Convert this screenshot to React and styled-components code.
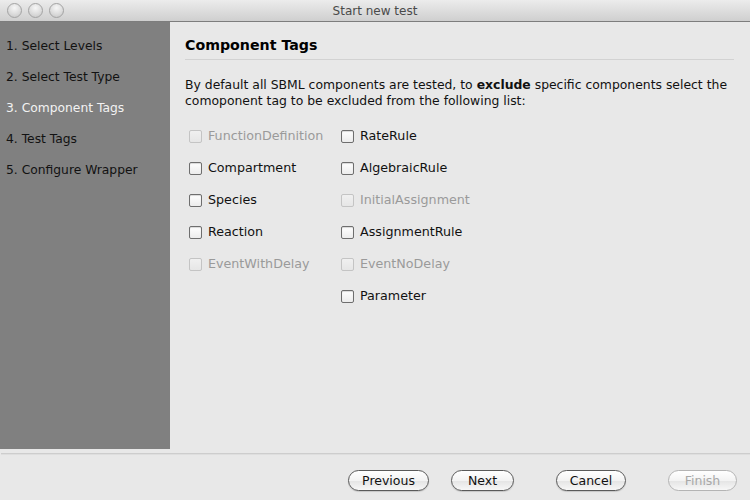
import React from "react";
import styled, { createGlobalStyle } from "styled-components";

const Global = createGlobalStyle`
  html, body { margin: 0; padding: 0; background: #e8e8e8; }
  * { box-sizing: border-box; }
  body { font-family: "DejaVu Sans", "Liberation Sans", sans-serif; }
`;

const Window = styled.div`
  width: 750px;
  height: 500px;
  display: flex;
  flex-direction: column;
  background: #e8e8e8;
  overflow: hidden;
`;

const TitleBar = styled.div`
  height: 22px;
  flex: none;
  display: flex;
  align-items: center;
  position: relative;
  background: linear-gradient(#ececec, #cfcfcf);
  border-bottom: 1px solid #7d7d7d;
`;

const Lights = styled.div`
  display: flex;
  gap: 6px;
  padding-left: 7px;
`;

const Light = styled.span`
  width: 15px;
  height: 15px;
  border-radius: 50%;
  border: 1px solid #a3a3a3;
  background: radial-gradient(circle at 50% 30%, #f7f7f7 0%, #dcdcdc 55%, #c4c4c4 100%);
`;

const Title = styled.div`
  position: absolute;
  left: 0;
  right: 0;
  text-align: center;
  font-size: 12px;
  color: #4a4a4a;
`;

const Body = styled.div`
  height: 427px;
  flex: none;
  display: flex;
`;

const Sidebar = styled.div`
  width: 170px;
  background: #808080;
  padding-top: 16px;
  display: flex;
  flex-direction: column;
`;

const Step = styled.div`
  height: 31px;
  padding-left: 6px;
  font-size: 12.3px;
  line-height: 16px;
  color: ${(p) => (p.$active ? "#f2f2f2" : "#121212")};
`;

const Content = styled.div`
  flex: 1;
  padding: 13px 16px 0 15px;
  display: flex;
  flex-direction: column;
`;

const Heading = styled.h1`
  margin: 0;
  font-size: 14.2px;
  font-weight: bold;
  color: #000;
  line-height: 20px;
  padding-bottom: 4px;
  border-bottom: 1px solid #d2d2d2;
`;

const Para = styled.div`
  margin-top: 17px;
  font-size: 12.4px;
  line-height: 16px;
  color: #111;
`;

const Line = styled.div`
  white-space: nowrap;
`;

const Strong = styled.span`
  font-weight: bold;
`;

const Grid = styled.div`
  margin-top: 19px;
  display: grid;
  grid-template-columns: 152px auto;
  grid-auto-rows: 32px;
  padding-left: 4px;
`;

const Item = styled.div`
  display: flex;
  align-items: flex-start;
  gap: 6px;
  font-size: 12.7px;
  line-height: 16px;
  color: ${(p) => (p.$disabled ? "#9a9a9a" : "#111")};
  grid-column: ${(p) => p.$col};
`;

const Box = styled.span`
  width: 13px;
  height: 13px;
  margin-top: 2px;
  flex: none;
  border-radius: 2px;
  border: 1px solid ${(p) => (p.$disabled ? "#c4c4c4" : "#6e6e6e")};
  background: ${(p) =>
    p.$disabled
      ? "linear-gradient(#f0f0f0, #e6e6e6)"
      : "linear-gradient(#ffffff, #ececec)"};
  box-shadow: ${(p) => (p.$disabled ? "none" : "inset 0 1px 1px rgba(0,0,0,0.15)")};
`;

const Footer = styled.div`
  flex: 1;
  display: flex;
  flex-direction: column;
  padding-top: 4px;
`;

const Divider = styled.div`
  height: 2px;
  margin-left: 1px;
  border-top: 1px solid #cdcdcd;
  border-bottom: 1px solid #dedede;
`;

const Buttons = styled.div`
  display: flex;
  justify-content: flex-end;
  padding: 15px 13px 0 0;
`;

const Button = styled.button`
  height: 21px;
  width: ${(p) => p.$w}px;
  margin-left: ${(p) => p.$ml}px;
  border-radius: 11px;
  border: 1px solid ${(p) => (p.disabled ? "#b4b4b4" : "#5a5a5a")};
  background: linear-gradient(#ffffff 0%, #f3f3f3 50%, #e4e4e4 51%, #f7f7f7 100%);
  font-family: "DejaVu Sans", "Liberation Sans", sans-serif;
  font-size: 12.5px;
  color: ${(p) => (p.disabled ? "#a8a8a8" : "#111")};
  padding: 0;
  line-height: 19px;
  box-shadow: ${(p) => (p.disabled ? "none" : "0 1px 1px rgba(0,0,0,0.15)")};
`;

const steps = [
  "1. Select Levels",
  "2. Select Test Type",
  "3. Component Tags",
  "4. Test Tags",
  "5. Configure Wrapper",
];

const items = [
  ["FunctionDefinition", true, 1],
  ["RateRule", false, 2],
  ["Compartment", false, 1],
  ["AlgebraicRule", false, 2],
  ["Species", false, 1],
  ["InitialAssignment", true, 2],
  ["Reaction", false, 1],
  ["AssignmentRule", false, 2],
  ["EventWithDelay", true, 1],
  ["EventNoDelay", true, 2],
  ["Parameter", false, 2],
];

export default function App() {
  return (
    <>
      <Global />
      <Window>
        <TitleBar>
          <Lights>
            <Light />
            <Light />
            <Light />
          </Lights>
          <Title>Start new test</Title>
        </TitleBar>
        <Body>
          <Sidebar>
            {steps.map((s, i) => (
              <Step key={s} $active={i === 2}>
                {s}
              </Step>
            ))}
          </Sidebar>
          <Content>
            <Heading>Component Tags</Heading>
            <Para>
              <Line>
                By default all SBML components are tested, to <Strong>exclude</Strong> specific components select the
              </Line>
              <Line>comoponent tag to be excluded from the following list:</Line>
            </Para>
            <Grid>
              {items.map(([label, dis, col]) => (
                <Item key={label} $disabled={dis} $col={col}>
                  <Box $disabled={dis} />
                  {label}
                </Item>
              ))}
            </Grid>
          </Content>
        </Body>
        <Footer>
          <Divider />
          <Buttons>
            <Button $w={81} $ml={0}>Previous</Button>
            <Button $w={63} $ml={22}>Next</Button>
            <Button $w={70} $ml={42}>Cancel</Button>
            <Button $w={69} $ml={42} disabled>Finish</Button>
          </Buttons>
        </Footer>
      </Window>
    </>
  );
}
